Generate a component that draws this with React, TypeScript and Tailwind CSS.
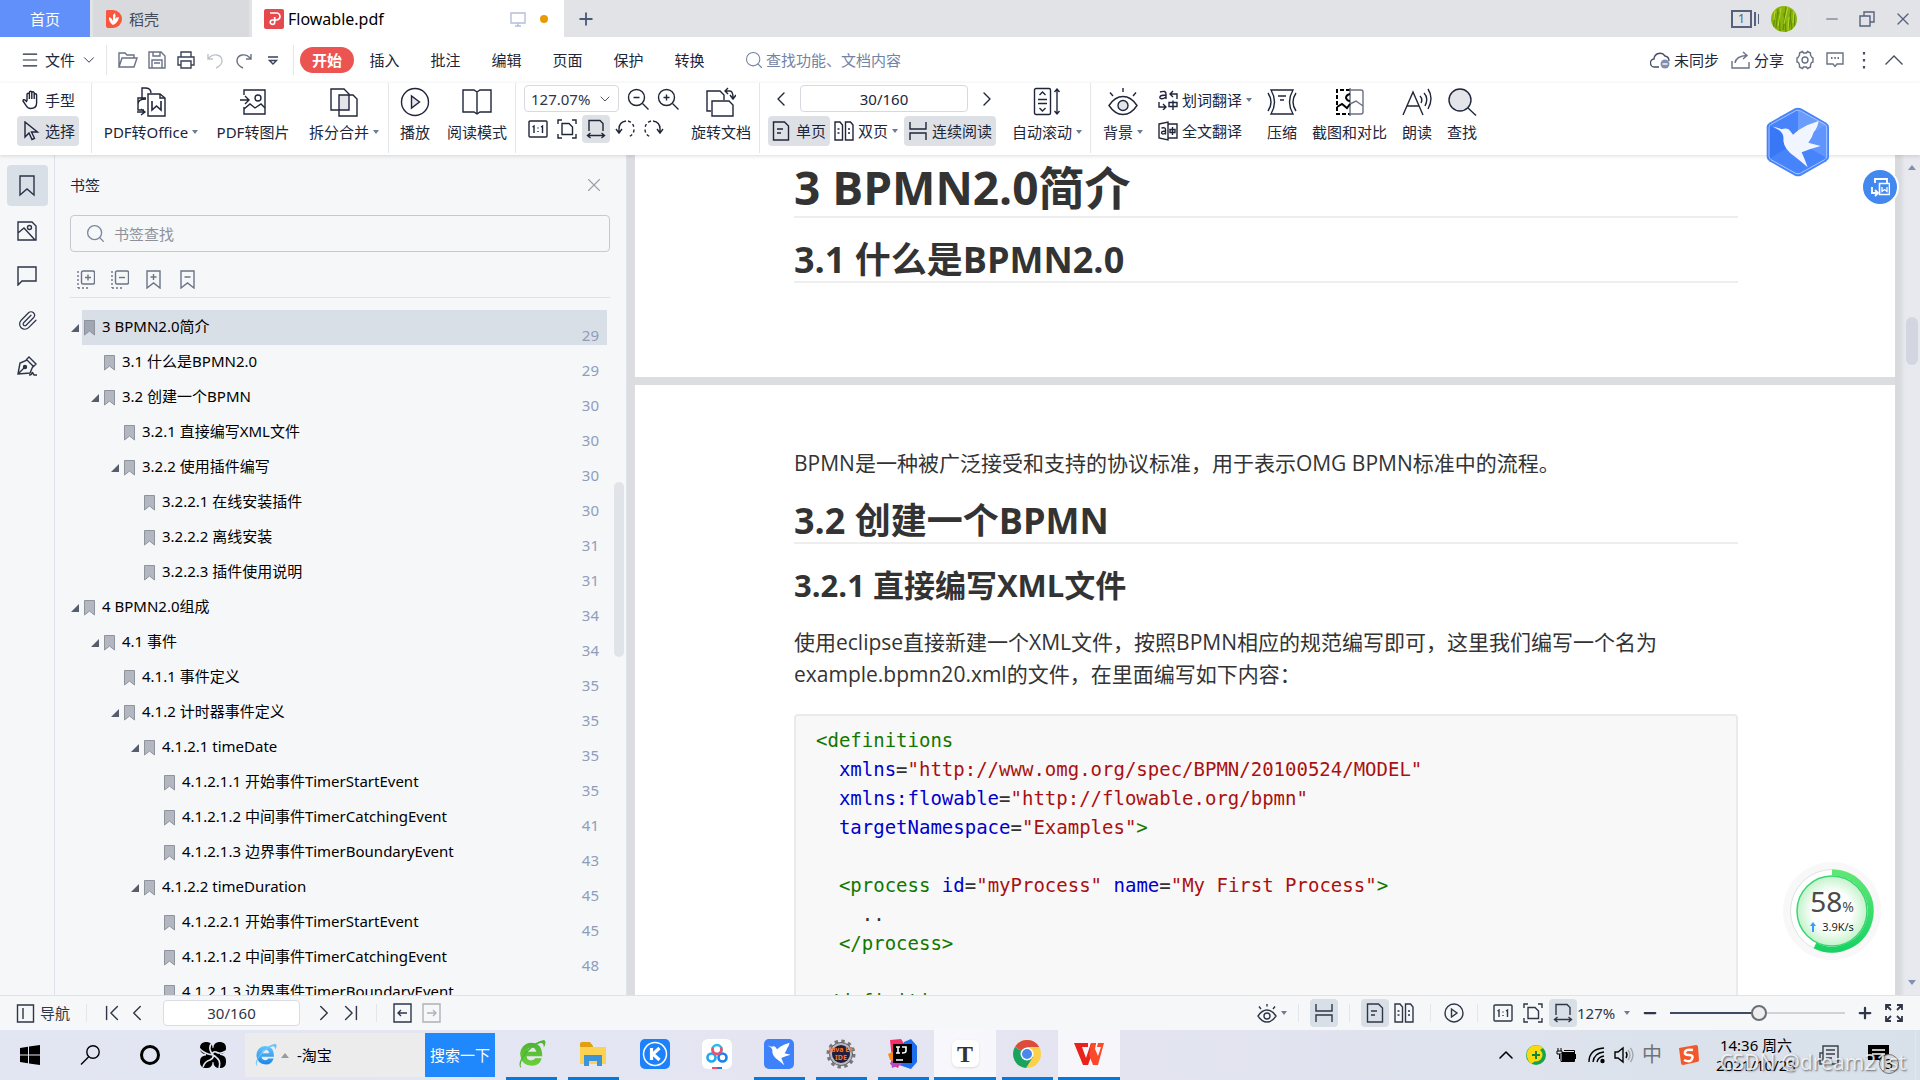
import React from "react";
import {
  ChevronDown,
  ChevronLeft,
  ChevronRight,
  ChevronUp,
  ChevronFirst,
  ChevronLast,
  Menu,
  Minus,
  Paperclip,
  Plus,
  Search,
  X,
} from "lucide-react";

interface IconProps {
  w?: number;
  h?: number;
  className?: string;
  children: React.ReactNode;
}

const Icon: React.FC<IconProps> = ({ w = 20, h = 20, className = "", children }) => (
  <svg
    width={w}
    height={h}
    viewBox={`0 0 ${w} ${h}`}
    fill="none"
    stroke="currentColor"
    strokeWidth={1.4}
    className={`shrink-0 ${className}`}
    aria-hidden="true"
  >
    {children}
  </svg>
);

const Caret = () => (
  <svg width="6" height="4" viewBox="0 0 6 4" className="shrink-0" aria-hidden="true">
    <path d="M0 0h6L3 4z" fill="#6d7a99" />
  </svg>
);

const Sep = ({ className = "" }: { className?: string }) => (
  <div className={`w-px shrink-0 bg-[#e4e6ea] ${className}`} />
);

/* ---------- shared page view icons ---------- */

const ActualSizeIcon = () => (
  <Icon>
    <rect x="1" y="2" width="18" height="16" rx="1" />
    <path d="M4.500 8l1.500-1v7M13 8l1.500-1v7M10 8.500v1M10 12v1" />
  </Icon>
);

const FitPageIcon = () => (
  <Icon>
    <path d="M1 5V1h4M15 1h4v4M19 15v4h-4M5 19H1v-4" />
    <path d="M5 4.500h7l3.500 3.500v7.500H5z" />
  </Icon>
);

const FitWidthIcon = () => (
  <Icon>
    <path d="M3 12V1.500h11l3 3V12" />
    <path d="M1.500 16.500h17M4.500 14l-3 2.500 3 2.500M15.500 14l3 2.500-3 2.500" />
  </Icon>
);

const SinglePageIcon = () => (
  <Icon w={18}>
    <path d="M1.500 1h11l4 4v14h-15zM5 8h6M5 12h4" />
  </Icon>
);

const DoublePageIcon = () => (
  <Icon>
    <path d="M1 1h5l2.500 3v15H1zM11.500 1h5L19 4v15h-7.500zM3.500 8h2M3.500 12h2M14 8h2M14 12h2" />
  </Icon>
);

const ContinuousIcon = () => (
  <Icon>
    <path d="M2 1v7h16V1M2 19v-7h16v7" />
  </Icon>
);

const BirdPath = ({ fill }: { fill: string }) => (
  <path
    d="M458 381Q472 383 483 389Q502 382 509 393L518 405Q535 389 560 377L595 364Q592 384 580 398Q576 414 564 429L601 439Q570 447 544 458Q553 478 562 503Q541 484 524 471Q492 450 489 423Q492 402 476 391Z"
    fill={fill}
  />
);

/* ---------- title bar ---------- */

const TitleBar = () => (
  <header className="flex h-[37px] shrink-0 items-stretch bg-[#e2e3e7]">
    <button className="w-[90px] bg-[#6190fb] text-white">首页</button>
    <button className="ml-[3px] flex w-[156px] items-center gap-[7px] bg-[#d9dadd] pl-[13px] text-[#454b57]">
      <svg width="16" height="18" viewBox="0 0 16 18" aria-hidden="true">
        <path d="M1 0h6a9 9 0 0 1 0 18H2a2 2 0 0 1-2-2V1z" fill="#f8573e" />
        <path d="M7 15C3 12 3 9 3 7q3 1 4 4V5l2-2q1 2 0 6 1-2 4-2-1 6-6 8z" fill="#fff" />
      </svg>
      稻壳
    </button>
    <div className="ml-[3px] flex w-[312px] items-center bg-white pl-3">
      <svg width="20" height="20" viewBox="0 0 20 20" aria-hidden="true">
        <rect width="20" height="20" rx="2" fill="#e5484d" />
        <path
          d="M6 4h6.500a3.500 3.500 0 0 1 0 7H8.500a2.200 2.200 0 1 0 2.200 2.200V8"
          fill="none"
          stroke="#fff"
          strokeWidth="1.700"
        />
      </svg>
      <span className="ml-1 text-base text-black">Flowable.pdf</span>
      <Icon w={16} h={16} className="mr-3.5 ml-auto text-[#b4bfdc]">
        <path d="M1 2h14v10H1zM8 12v3M5 15h6" />
      </Icon>
      <span className="mr-4 h-2 w-2 rounded-full bg-[#e89a07]" />
    </div>
    <button className="flex w-11 items-center justify-center text-[#4c587a]" aria-label="新建标签">
      <Plus size={20} strokeWidth={2.2} />
    </button>
    <div className="ml-auto flex items-center text-[#56627d]">
      <div className="flex gap-0.5">
        <span className="flex h-[18px] w-[21px] items-center justify-center border-2 border-[#56627d] text-xs">
          1
        </span>
        <span className="my-0.5 w-0.5 bg-[#56627d]" />
        <span className="my-1 w-px bg-[#56627d]" />
      </div>
      <svg width="26" height="26" viewBox="0 0 26 26" className="ml-3" aria-hidden="true">
        <defs>
          <clipPath id="avatar">
            <circle cx="13" cy="13" r="13" />
          </clipPath>
        </defs>
        <g clipPath="url(#avatar)" fill="none">
          <rect width="26" height="26" fill="#8cb50c" />
          <path
            d="M2 26L4 8M5 22L7 3M9 26l-1-20M12 24l3-23M15 26L13 7M18 23l2-19M21 24l-2-16M24 22l-1-14"
            stroke="#5f8f05"
            strokeWidth="1.200"
          />
          <path
            d="M7 20l3-18M13 18l4-18M17 24l1-13M22 17l1-12M3 14l1-10"
            stroke="#b9d72f"
            strokeWidth="1"
          />
        </g>
      </svg>
      <Sep className="ml-3 h-6 bg-[#c8cad0]" />
      <button className="flex w-11 justify-center" aria-label="最小化">
        <Minus size={18} strokeWidth={1.6} />
      </button>
      <button className="flex w-[26px] justify-center" aria-label="还原">
        <Icon w={16} h={16}>
          <path d="M1 5h10v10H1zM5 5V1h10v10h-4" />
        </Icon>
      </button>
      <button className="ml-1.5 flex w-[34px] justify-center" aria-label="关闭">
        <X size={20} strokeWidth={1.6} />
      </button>
    </div>
  </header>
);

/* ---------- menu row ---------- */

const menuTabs = ["插入", "批注", "编辑", "页面", "保护", "转换"];

const MenuRow = () => (
  <div className="flex h-[46px] shrink-0 items-center bg-white pl-5 text-[#20263a]">
    <button className="flex w-20 items-center justify-between pr-0.5">
      <Menu size={20} strokeWidth={1.4} />
      文件
      <ChevronDown size={18} strokeWidth={1.2} />
    </button>
    <Sep className="mx-1.5 h-[30px]" />
    <div className="flex text-[#6a7183]">
      <button className="flex w-[29px] justify-center" aria-label="打开">
        <Icon h={18}>
          <path d="M1 16V2h6l2 2h7v3M1 16L4 7h15l-3 9z" />
        </Icon>
      </button>
      <button className="flex w-[29px] justify-center" aria-label="保存">
        <Icon w={18} h={18}>
          <path d="M1 1h12l4 4v12H1zM5 1v4h7V1M4 17V9h10v8M6 12h6" />
        </Icon>
      </button>
      <button className="flex w-[29px] justify-center text-[#3b4257]" aria-label="打印">
        <Icon w={18} h={18}>
          <path d="M4 6V1h10v5M4 14H1V6h16v8h-3M4 10h10v7H4z" />
        </Icon>
      </button>
      <button className="flex w-[29px] justify-center text-[#c0c3ca]" aria-label="撤销">
        <Icon w={16} h={18}>
          <path d="M1 3v5h5M1 8q4-5 9-4 5 1 5 6 0 4-6 7" />
        </Icon>
      </button>
      <button className="flex w-[29px] justify-center" aria-label="重做">
        <Icon w={16} h={18}>
          <path d="M15 3v5h-5M15 8q-4-5-9-4-5 1-5 6 0 4 6 7" />
        </Icon>
      </button>
      <button className="flex w-[29px] justify-center text-[#3b4257]" aria-label="更多">
        <Icon w={12} h={18}>
          <path d="M1 6h10M2.500 9.500L6 13l3.500-3.500z" />
        </Icon>
      </button>
    </div>
    <Sep className="mx-1.5 h-[30px]" />
    <button className="h-[26px] w-[54px] rounded-full bg-[#eb5451] font-bold text-white">
      开始
    </button>
    {menuTabs.map((tab) => (
      <button key={tab} className="w-[61px]">
        {tab}
      </button>
    ))}
    <label className="ml-6 flex items-center gap-0.5 text-[#7482a3]">
      <Search size={20} strokeWidth={1.3} />
      <input
        aria-label="查找功能"
        placeholder="查找功能、文档内容"
        className="w-40 bg-transparent outline-none placeholder:text-[#7482a3]"
      />
    </label>
    <div className="ml-auto flex items-center gap-3 pr-4">
      <button className="flex items-center gap-1">
        <Icon>
          <path d="M9 17H5a4 4 0 0 1-1-8 6 6 0 0 1 11-3 5 5 0 0 1 4 5" stroke="#454d63" />
          <circle cx="15" cy="14" r="4.500" fill="#8290b0" stroke="none" />
          <path d="M12.500 14h5" stroke="#fff" />
        </Icon>
        未同步
      </button>
      <button className="flex items-center gap-1">
        <Icon w={19} h={18} className="text-[#6a7183]">
          <path d="M1 10v7h17v-6M4 12q1-7 12-7.500M12 1l4 3.500L12 8" />
        </Icon>
        分享
      </button>
      <button aria-label="设置" className="text-[#6a7183]">
        <Icon w={18}>
          <path d="M6.500 1.500l1 1.500h3l1-1.500 3 1.500v2l1.500 2.500L17 8v4l-1.500.5-1 2.500v2l-3 1.500-1-1.500h-3l-1 1.500-3-1.500v-2l-1-2.500L1 12V8l1-.5L3.500 5V3z" />
          <circle cx="9" cy="10" r="3" />
        </Icon>
      </button>
      <button aria-label="反馈" className="text-[#6a7183]">
        <Icon w={18} h={16}>
          <path d="M1 1h16v11h-6l-2 2.500L7 12H1z" />
          <path d="M5 6h1.500M8.300 6h1.500M11.500 6H13" strokeWidth="1.800" />
        </Icon>
      </button>
      <button aria-label="更多选项" className="px-1.5 text-[#454d63]">
        <Icon w={4} h={18}>
          <path d="M2 1v2.500M2 8v2.500M2 15v2.500" strokeWidth="2.200" />
        </Icon>
      </button>
      <button aria-label="收起功能区" className="text-[#454d63]">
        <Icon w={20} h={12}>
          <path d="M1.500 10.500L10 2l8.500 8.500" />
        </Icon>
      </button>
    </div>
  </div>
);

/* ---------- ribbon ---------- */

interface ToolProps {
  label: string;
  width: string;
  caret?: boolean;
  children: React.ReactNode;
}

const Tool: React.FC<ToolProps> = ({ label, width, caret, children }) => (
  <button className={`flex shrink-0 flex-col items-center justify-between pt-1 pb-[13px] ${width}`}>
    <span className="flex h-[30px] items-center">{children}</span>
    <span className="flex h-5 items-center gap-1 whitespace-nowrap">
      {label}
      {caret && <Caret />}
    </span>
  </button>
);

const Ribbon = () => (
  <div className="relative z-10 flex h-[72px] shrink-0 bg-white pl-[17px] text-[#20263a] shadow-[0_1px_4px_rgba(0,0,0,0.14)]">
    <div className="flex w-[62px] shrink-0 flex-col gap-px pt-0.5">
      <button className="flex h-[30px] items-center justify-center gap-1">
        <Icon>
          <path d="M6 11V4.500a1.200 1.200 0 0 1 2.400 0V2.500a1.200 1.200 0 0 1 2.400 0v.5a1.200 1.200 0 0 1 2.400 0v2a1.200 1.200 0 0 1 2.400 0V13q0 5.500-6 5.500-3 0-4.500-3L2 11q0-2 2-1l2 2M8.400 4.500V9M10.800 3v6M13.200 4v5" />
        </Icon>
        手型
      </button>
      <button className="flex h-[30px] items-center justify-center gap-1 rounded-sm bg-[#dde1e6]">
        <Icon>
          <path d="M4 1v15l4-4 3 6.500 2.500-1.200-3-6.300h6z" />
        </Icon>
        选择
      </button>
    </div>
    <Sep className="mx-3 mb-0.5" />
    <div className="flex gap-[18px]">
      <Tool label="PDF转Office" width="w-[94px]" caret>
        <Icon w={30} h={30}>
          <path d="M10 11H2v5M6 11V1h3q6 0 6 5M2 16v7h6M2 17q0-5 8-5M1 25l7 0M5 22l4 3-4 3" />
          <path d="M12 7h12l5 4v18H12z" fill="#fff" />
          <path d="M24 7v4h5" />
          <path d="M16 14v9l4.500-4 4.500 4v-9" strokeWidth="1.600" />
        </Icon>
      </Tool>
      <Tool label="PDF转图片" width="w-[74px]">
        <Icon w={28} h={28}>
          <path d="M5 7V2h21v24H5v-7M1 12h9M6 8l4 4-4 4" />
          <circle cx="19" cy="10" r="3" />
          <path d="M5 21l6-5 5 4 6-4 4 4" />
        </Icon>
      </Tool>
      <Tool label="拆分合并" width="w-[72px]" caret>
        <Icon w={30} h={30}>
          <path d="M10 8h10v15H10z" fill="#e3e5ea" stroke="none" />
          <path d="M20 23H2V2h13l5 5zM10 23v6h18V12l-4-4H10v15" />
        </Icon>
      </Tool>
    </div>
    <Sep className="mx-2 mb-0.5" />
    <div className="flex gap-[14px]">
      <Tool label="播放" width="w-[36px]">
        <Icon w={30} h={30}>
          <circle cx="15" cy="15" r="13.500" />
          <path d="M11.500 9v12l8-6z" fill="#e3e5ea" />
        </Icon>
      </Tool>
      <Tool label="阅读模式" width="w-[60px]">
        <Icon w={30} h={30}>
          <path d="M15 27l-3-2H1V3h11l3 2 3-2h11v22H18zM15 5v22" />
        </Icon>
      </Tool>
    </div>
    <Sep className="mx-2 mb-0.5" />
    <div className="flex w-[155px] shrink-0 flex-col gap-[3px] pt-0.5">
      <div className="flex items-center gap-2">
        <div className="relative w-[95px]">
          <select
            aria-label="缩放比例"
            className="h-[27px] w-full appearance-none rounded-sm border border-[#d6d9e0] bg-white pl-1.5 text-[#2f3648]"
          >
            <option>127.07%</option>
          </select>
          <ChevronDown
            size={16}
            strokeWidth={1.2}
            className="pointer-events-none absolute top-1.5 right-1.5"
          />
        </div>
        <button aria-label="缩小">
          <Icon w={22} h={22}>
            <circle cx="9.500" cy="9.500" r="8" />
            <path d="M15.500 15.500l6 6M6.500 9.500h6" />
          </Icon>
        </button>
        <button aria-label="放大">
          <Icon w={22} h={22}>
            <circle cx="9.500" cy="9.500" r="8" />
            <path d="M15.500 15.500l6 6M6.500 9.500h6M9.500 6.500v6" />
          </Icon>
        </button>
      </div>
      <div className="flex gap-px">
        <button className="flex h-7 w-7 items-center justify-center" aria-label="实际大小">
          <ActualSizeIcon />
        </button>
        <button className="flex h-7 w-7 items-center justify-center" aria-label="适合页面">
          <FitPageIcon />
        </button>
        <button
          className="flex h-7 w-7 items-center justify-center rounded-sm bg-[#dde1e6]"
          aria-label="适合宽度"
        >
          <FitWidthIcon />
        </button>
        <button className="flex h-7 w-7 items-center justify-center" aria-label="向左旋转">
          <Icon>
            <path d="M4 13V10q0-7 7-8M1 10l3 4 3-4" />
            <path d="M13 2q6 2 6 8t-6 8" strokeDasharray="3 2.500" />
          </Icon>
        </button>
        <button className="flex h-7 w-7 items-center justify-center" aria-label="向右旋转">
          <Icon>
            <path d="M16 13V10q0-7-7-8M13 10l3 4 3-4" />
            <path d="M7 2q-6 2-6 8t6 8" strokeDasharray="3 2.500" />
          </Icon>
        </button>
      </div>
    </div>
    <div className="ml-3 flex">
      <Tool label="旋转文档" width="w-[60px]">
        <Icon w={30} h={30}>
          <path d="M5 24H1V4h13l4 4v5M6 29V14h17l4 4v11z" />
          <path d="M19 4h5q3 0 3 7M22 1l-3 3 3 3M24 8l3 4 3-4" />
        </Icon>
      </Tool>
    </div>
    <Sep className="mx-2 mb-0.5" />
    <div className="flex w-[232px] shrink-0 flex-col gap-1 pt-0.5">
      <div className="flex items-center gap-1.5">
        <button className="flex w-[26px] justify-center" aria-label="上一页">
          <ChevronLeft size={24} strokeWidth={1.4} />
        </button>
        <input
          aria-label="页码"
          defaultValue="30/160"
          className="h-[27px] w-[168px] rounded-sm border border-[#d6d9e0] text-center"
        />
        <button className="flex w-[26px] justify-center" aria-label="下一页">
          <ChevronRight size={24} strokeWidth={1.4} />
        </button>
      </div>
      <div className="flex gap-1">
        <button className="flex h-[30px] w-[62px] items-center justify-center gap-1.5 rounded-sm bg-[#dde1e6]">
          <SinglePageIcon />
          单页
        </button>
        <button className="flex h-[30px] w-[66px] items-center gap-1">
          <DoublePageIcon />
          双页
          <Caret />
        </button>
        <button className="flex h-[30px] w-[92px] items-center justify-center gap-1 rounded-sm bg-[#dde1e6]">
          <ContinuousIcon />
          连续阅读
        </button>
      </div>
    </div>
    <div className="ml-3 flex">
      <Tool label="自动滚动" width="w-[70px]" caret>
        <Icon w={28} h={30}>
          <rect x="1.500" y="1.500" width="16" height="26" rx="1.500" />
          <path d="M6.500 8l3-3 3 3M6.500 21l3 3 3-3M5 12.500h9M5 16.500h9M24 2v25M21.500 5L24 2l2.500 3M21.500 24l2.500 3 2.500-3" />
        </Icon>
      </Tool>
    </div>
    <Sep className="mx-2 mb-0.5" />
    <div className="flex gap-[15px] pl-1">
      <Tool label="背景" width="w-[40px]" caret>
        <Icon w={30} h={30}>
          <path d="M1 18.500Q7 9.500 15 9.500t14 9q-6 9-14 9T1 18.500z" />
          <circle cx="15" cy="18.500" r="5" fill="#e3e5ea" />
          <path d="M15 1v4M2 5.500l3 3.500M28 5.500L25 9" />
        </Icon>
      </Tool>
      <div className="flex w-[94px] flex-col gap-px pt-0.5">
        <button className="flex h-[30px] items-center gap-1 whitespace-nowrap">
          <Icon>
            <path d="M2 2q6-2 6 2v5M8 5Q1 5 2 8q2 2 6-1M12 4h7v5M15 1l-3 3 3 3M1 12v5h7M5 14l3 3-3 3M11 12.500h8v4h-8zM15 10.500V20" />
          </Icon>
          划词翻译
          <Caret />
        </button>
        <button className="flex h-[30px] items-center gap-1 whitespace-nowrap">
          <Icon>
            <path d="M1 3l9-2v18l-9-2zM10 3h9v14h-9M3.500 7q4-1 4 1.500v5M7.500 10q-4 0-4 2 1 2 4 0M12 8.500h5v3h-5zM14.500 6v8" />
          </Icon>
          全文翻译
        </button>
      </div>
      <Tool label="压缩" width="w-[30px]">
        <Icon w={30} h={28}>
          <path d="M4 2h22q-7 12 0 24H4q7-12 0-24zM11 8h8M13 12h4M1 5q6 9 0 18M29 5q-6 9 0 18" />
        </Icon>
      </Tool>
      <Tool label="截图和对比" width="w-[75px]">
        <Icon w={30} h={28}>
          <path d="M15 2H2v24h13" stroke="#000" strokeWidth="2" strokeDasharray="4 2" />
          <path d="M15 0v28M15 2h11q2 0 2 2v20q0 2-2 2H15M15 16l6-3 7 5" stroke="#6a7183" />
          <path d="M15 6q-4 1-4 4 1 3 4 3M2 19l5-3 5 4 3-4" stroke="#000" strokeWidth="2" />
        </Icon>
      </Tool>
      <Tool label="朗读" width="w-[30px]">
        <Icon w={30} h={28}>
          <path d="M1 27L11 4l10 23M5 18h12M18 8q3 3 1 7M22 5q5 5 1 13M26 1q6 9 0 20" />
        </Icon>
      </Tool>
      <Tool label="查找" width="w-[30px]">
        <Icon w={30} h={28}>
          <circle cx="13" cy="12" r="11" fill="#e3e5ea" />
          <path d="M21 20l8 7.500" />
        </Icon>
      </Tool>
    </div>
  </div>
);

/* ---------- bookmark panel ---------- */

interface Bookmark {
  title: string;
  page: number;
  indent: string;
  open?: boolean;
}

const bookmarks: Bookmark[] = [
  { title: "3 BPMN2.0简介", page: 29, indent: "pl-0", open: true },
  { title: "3.1 什么是BPMN2.0", page: 29, indent: "pl-5" },
  { title: "3.2 创建一个BPMN", page: 30, indent: "pl-5", open: true },
  { title: "3.2.1 直接编写XML文件", page: 30, indent: "pl-10" },
  { title: "3.2.2 使用插件编写", page: 30, indent: "pl-10", open: true },
  { title: "3.2.2.1 在线安装插件", page: 30, indent: "pl-15" },
  { title: "3.2.2.2 离线安装", page: 31, indent: "pl-15" },
  { title: "3.2.2.3 插件使用说明", page: 31, indent: "pl-15" },
  { title: "4 BPMN2.0组成", page: 34, indent: "pl-0", open: true },
  { title: "4.1 事件", page: 34, indent: "pl-5", open: true },
  { title: "4.1.1 事件定义", page: 35, indent: "pl-10" },
  { title: "4.1.2 计时器事件定义", page: 35, indent: "pl-10", open: true },
  { title: "4.1.2.1 timeDate", page: 35, indent: "pl-15", open: true },
  { title: "4.1.2.1.1 开始事件TimerStartEvent", page: 35, indent: "pl-20" },
  { title: "4.1.2.1.2 中间事件TimerCatchingEvent", page: 41, indent: "pl-20" },
  { title: "4.1.2.1.3 边界事件TimerBoundaryEvent", page: 43, indent: "pl-20" },
  { title: "4.1.2.2 timeDuration", page: 45, indent: "pl-15", open: true },
  { title: "4.1.2.2.1 开始事件TimerStartEvent", page: 45, indent: "pl-20" },
  { title: "4.1.2.1.2 中间事件TimerCatchingEvent", page: 48, indent: "pl-20" },
  { title: "4.1.2.1.3 边界事件TimerBoundaryEvent", page: 50, indent: "pl-20" },
];

const SideRail = () => (
  <nav className="flex w-[55px] shrink-0 flex-col items-center gap-1 border-r border-[#dfe2e8] bg-[#f5f7f9] pt-2.5 text-[#2c3347]">
    <button
      className="flex h-[41px] w-[41px] items-center justify-center rounded-sm bg-[#d9dfe6]"
      aria-label="书签"
    >
      <Icon w={16} h={22}>
        <path d="M1 1h14v19l-7-6-7 6z" />
      </Icon>
    </button>
    <button className="flex h-[41px] w-[41px] items-center justify-center" aria-label="缩略图">
      <Icon>
        <path d="M1 1h14l4 4v14H1zM1 12l6-5 11 12" />
        <circle cx="12.500" cy="6.500" r="2" />
      </Icon>
    </button>
    <button className="flex h-[41px] w-[41px] items-center justify-center" aria-label="批注">
      <Icon>
        <path d="M1 1h18v14H5l-4 4z" />
      </Icon>
    </button>
    <button className="flex h-[41px] w-[41px] items-center justify-center" aria-label="附件">
      <Paperclip size={21} strokeWidth={1.4} />
    </button>
    <button className="flex h-[41px] w-[41px] items-center justify-center" aria-label="签名">
      <Icon>
        <path d="M1 18l2-11 7-3 6 6-3 7zM9 4l3-3 7 7-3 3M1 18l6-6M12 19q3 0 3-2t2 2h3" />
        <circle cx="8" cy="11" r="1.500" fill="currentColor" />
      </Icon>
    </button>
  </nav>
);

const BookmarkPanel = () => (
  <aside className="flex w-[572px] shrink-0 flex-col border-r border-[#dfe2e8] bg-[#f5f7f9]">
    <div className="flex items-center justify-between pt-[19px] pr-[21px] pb-[19px] pl-[15px]">
      <h2 className="leading-[22px] text-[#20263a]">书签</h2>
      <button aria-label="关闭书签" className="text-[#9a9fa9]">
        <X size={22} strokeWidth={1.2} />
      </button>
    </div>
    <div className="mr-4 ml-[15px] border-b border-[#dfe2e8] pb-2">
      <label className="flex h-[37px] items-center gap-2 rounded-sm border border-[#c6c9cf] pl-3.5 text-[#7c879f]">
        <Search size={21} strokeWidth={1.5} />
        <input
          aria-label="书签查找"
          placeholder="书签查找"
          className="flex-1 bg-transparent outline-none placeholder:text-[#8e9198]"
        />
      </label>
      <div className="mt-[18px] flex gap-4 pl-[7px] text-[#6d7487]">
        <button aria-label="展开全部">
          <Icon w={18} h={19}>
            <rect x="4.500" y="1" width="13" height="13" rx="1.500" />
            <path d="M11 4.500v6M8 7.500h6" />
            <path d="M1 1v17M1 18h12" strokeDasharray="2 2" />
          </Icon>
        </button>
        <button aria-label="收起全部">
          <Icon w={18} h={19}>
            <rect x="4.500" y="1" width="13" height="13" rx="1.500" />
            <path d="M8 7.500h6" />
            <path d="M1 1v17M1 18h12" strokeDasharray="2 2" />
          </Icon>
        </button>
        <button aria-label="添加书签">
          <Icon w={18} h={19}>
            <path d="M2 1h13v17l-6.500-5L2 18zM8.500 4v6M5.500 7h6" />
          </Icon>
        </button>
        <button aria-label="删除书签">
          <Icon w={18} h={19}>
            <path d="M2 1h13v17l-6.500-5L2 18zM5.500 7h6" />
          </Icon>
        </button>
      </div>
    </div>
    <div className="relative mt-3 min-h-0 flex-1 overflow-hidden pr-[19px] pl-[15px]">
      <ul>
        {bookmarks.map((b, i) => (
          <li key={i} className={b.indent}>
            <button className="flex h-[35px] w-full items-stretch text-left text-black">
              <span className="flex w-3 shrink-0 items-center">
                {b.open && (
                  <svg width="9" height="9" viewBox="0 0 9 9" aria-hidden="true">
                    <path d="M9 1v8H1z" fill="#565d6d" />
                  </svg>
                )}
              </span>
              <span
                className={`flex flex-1 gap-[7px] pr-2 pl-0.5 ${i === 0 ? "bg-[#d9dfe6]" : ""}`}
              >
                <svg
                  width="11"
                  height="16"
                  viewBox="0 0 11 16"
                  className="self-center"
                  aria-hidden="true"
                >
                  <path
                    d="M.5.5h10v14.500l-5-4-5 4z"
                    fill={i === 0 ? "#a0a7b2" : "#b3b7bf"}
                    stroke="#8e939d"
                  />
                </svg>
                <span className="leading-[33px]">{b.title}</span>
                <span className="ml-auto self-end text-[#8f9dbb]">{b.page}</span>
              </span>
            </button>
          </li>
        ))}
      </ul>
      <div className="absolute top-[172px] right-0.5 h-[175px] w-2.5 rounded-full bg-[#e0e3e7]" />
    </div>
  </aside>
);

/* ---------- document ---------- */

const Tag = ({ children }: { children: React.ReactNode }) => (
  <span className="text-[#117700]">{children}</span>
);
const Attr = ({ children }: { children: React.ReactNode }) => (
  <span className="text-[#0000cc]">{children}</span>
);
const Str = ({ children }: { children: React.ReactNode }) => (
  <span className="text-[#aa1111]">{children}</span>
);

const DocumentView = () => (
  <main className="flex min-w-0 flex-1 bg-[#dcdde0] pl-2 font-['Open_Sans','Noto_Sans_CJK_SC',sans-serif] text-[#333333]">
    <div className="flex min-w-0 flex-1 flex-col gap-2 overflow-hidden">
      <section className="h-[222px] shrink-0 bg-white pr-[157px] pl-[159px]">
        <h1 className="h-[63px] border-b-2 border-[#eeeeee] text-[46px] leading-[64px] font-bold">
          3 BPMN2.0简介
        </h1>
        <h2 className="mt-5 h-[45px] border-b-2 border-[#eeeeee] text-[36px] leading-[44px] font-bold">
          3.1 什么是BPMN2.0
        </h2>
      </section>
      <section className="flex-1 overflow-hidden bg-white pt-[62px] pr-[157px] pl-[159px]">
        <p className="text-[21px] leading-8">
          BPMN是一种被广泛接受和支持的协议标准，用于表示OMG BPMN标准中的流程。
        </p>
        <h2 className="mt-5 h-[45px] border-b-2 border-[#eeeeee] text-[36px] leading-[44px] font-bold">
          3.2 创建一个BPMN
        </h2>
        <h3 className="mt-5 text-[31px] leading-[42px] font-bold">3.2.1 直接编写XML文件</h3>
        <p className="mt-5 text-[21px] leading-8">
          使用eclipse直接新建一个XML文件，按照BPMN相应的规范编写即可，这里我们编写一个名为
          <br />
          example.bpmn20.xml的文件，在里面编写如下内容：
        </p>
        <pre className="mt-6 overflow-hidden rounded border-2 border-[#e9eaed] bg-[#f8f8f8] px-5 py-2.5 font-['DejaVu_Sans_Mono',monospace] text-[19px] leading-[29px]">
          <Tag>&lt;definitions</Tag>
          {"\n  "}
          <Attr>xmlns</Attr>=<Str>"http://www.omg.org/spec/BPMN/20100524/MODEL"</Str>
          {"\n  "}
          <Attr>xmlns:flowable</Attr>=<Str>"http://flowable.org/bpmn"</Str>
          {"\n  "}
          <Attr>targetNamespace</Attr>=<Str>"Examples"</Str>
          <Tag>&gt;</Tag>
          {"\n\n  "}
          <Tag>&lt;process</Tag> <Attr>id</Attr>=<Str>"myProcess"</Str> <Attr>name</Attr>=
          <Str>"My First Process"</Str>
          <Tag>&gt;</Tag>
          {"\n    ..\n  "}
          <Tag>&lt;/process&gt;</Tag>
          {"\n\n"}
          <Tag>&lt;/definitions&gt;</Tag>
        </pre>
      </section>
    </div>
    <div className="flex w-[25px] shrink-0 flex-col items-center justify-between bg-linear-to-r from-[#d9dade] from-20% to-[#e8e9ee] to-40% py-2.5 pl-2">
      <svg width="8" height="5" viewBox="0 0 8 5" aria-hidden="true">
        <path d="M4 0l4 5H0z" fill="#8391b0" />
      </svg>
      <div className="mt-[147px] mb-auto h-12 w-3 rounded-full bg-[#d3d6e0]" />
      <svg width="8" height="5" viewBox="0 0 8 5" aria-hidden="true">
        <path d="M4 5l4-5H0z" fill="#8391b0" />
      </svg>
    </div>
  </main>
);

/* ---------- status bar ---------- */

const StatusBar = () => (
  <footer className="flex h-[35px] shrink-0 items-center border-t border-[#dfe2e8] bg-[#f5f7f9] pl-4 text-[#2f3648]">
    <button className="flex items-center gap-[5px]">
      <Icon w={19} h={19}>
        <path d="M1.500 1h16v17h-16zM7 4v11" />
      </Icon>
      导航
    </button>
    <Sep className="mx-4 h-[18px]" />
    <button aria-label="首页页码" className="flex w-[18px] justify-center">
      <ChevronFirst size={26} strokeWidth={1.3} className="shrink-0" />
    </button>
    <button aria-label="上一页" className="flex w-[42px] justify-center pr-2.5">
      <ChevronLeft size={26} strokeWidth={1.3} />
    </button>
    <input
      aria-label="当前页"
      defaultValue="30/160"
      className="h-[26px] w-[137px] rounded-sm border border-[#d9dce2] bg-white text-center"
    />
    <button aria-label="下一页" className="flex w-[42px] justify-center pl-1.5">
      <ChevronRight size={26} strokeWidth={1.3} />
    </button>
    <button aria-label="末页" className="flex w-[18px] justify-center">
      <ChevronLast size={26} strokeWidth={1.3} className="shrink-0" />
    </button>
    <Sep className="mx-4 h-[18px]" />
    <button aria-label="后退">
      <Icon w={19}>
        <path d="M1 1h17v18H1zM5 10h9M8 7l-3 3 3 3" />
      </Icon>
    </button>
    <button aria-label="前进" className="ml-2.5 text-[#aeb1b8]">
      <Icon w={19}>
        <path d="M1 1h17v18H1zM5 10h9M11 7l3 3-3 3" />
      </Icon>
    </button>
    <div className="ml-auto flex items-center gap-[11px] pr-[17px]">
      <button aria-label="背景" className="flex items-center gap-1">
        <Icon>
          <path d="M1 13q4-6 9-6t9 6q-4 6-9 6t-9-6zM10 1v2.500M2 3.500L4 6M18 3.500L16 6" />
          <circle cx="10" cy="13" r="3" />
        </Icon>
        <Caret />
      </button>
      <Sep className="h-[18px]" />
      <button
        aria-label="连续阅读"
        className="flex h-7 w-7 items-center justify-center rounded-sm bg-[#d9dfe6]"
      >
        <ContinuousIcon />
      </button>
      <Sep className="h-[18px]" />
      <div className="flex">
        <button
          aria-label="单页"
          className="flex h-7 w-7 items-center justify-center rounded-sm bg-[#d9dfe6]"
        >
          <SinglePageIcon />
        </button>
        <button aria-label="双页" className="flex h-7 w-[30px] items-center justify-center">
          <DoublePageIcon />
        </button>
      </div>
      <Sep className="h-[18px]" />
      <button aria-label="播放" className="px-0.5">
        <Icon>
          <circle cx="10" cy="10" r="9" />
          <path d="M7.500 6v8l5.500-4z" />
        </Icon>
      </button>
      <Sep className="h-[18px]" />
      <div className="flex items-center">
        <button aria-label="实际大小" className="flex h-7 w-7 items-center justify-center">
          <ActualSizeIcon />
        </button>
        <button aria-label="适合页面" className="mx-0.5 flex h-7 w-7 items-center justify-center">
          <FitPageIcon />
        </button>
        <button
          aria-label="适合宽度"
          className="flex h-7 w-7 items-center justify-center rounded-sm bg-[#d9dfe6]"
        >
          <FitWidthIcon />
        </button>
        <button className="flex w-[53px] items-center justify-between">
          127%
          <Caret />
        </button>
      </div>
      <button aria-label="缩小">
        <Minus size={18} strokeWidth={3} />
      </button>
      <input
        type="range"
        aria-label="缩放"
        min={0}
        max={100}
        defaultValue={51}
        className="h-4 w-[175px] appearance-none bg-[linear-gradient(90deg,#3f4a63_50%,#cfd2d8_50%)] bg-size-[100%_2px] bg-center bg-no-repeat [&::-webkit-slider-thumb]:h-4 [&::-webkit-slider-thumb]:w-4 [&::-webkit-slider-thumb]:appearance-none [&::-webkit-slider-thumb]:rounded-full [&::-webkit-slider-thumb]:border-2 [&::-webkit-slider-thumb]:border-[#6b6f78] [&::-webkit-slider-thumb]:bg-[#eeeeee]"
      />
      <button aria-label="放大">
        <Plus size={18} strokeWidth={3} />
      </button>
      <button aria-label="全屏">
        <Icon w={18} h={18}>
          <path
            d="M1 6V1h5M1 1l5 5M12 1h5v5M17 1l-5 5M17 12v5h-5M17 17l-5-5M6 17H1v-5M1 17l5-5"
            strokeWidth="1.800"
          />
        </Icon>
      </button>
    </div>
  </footer>
);

/* ---------- taskbar ---------- */

interface AppSlotProps {
  name: string;
  running?: boolean;
  active?: boolean;
  children: React.ReactNode;
}

const AppSlot: React.FC<AppSlotProps> = ({ name, running, active, children }) => (
  <button
    aria-label={name}
    className={`flex w-[62px] flex-col items-center ${active ? "bg-white/70" : ""}`}
  >
    <span className="flex flex-1 items-center">{children}</span>
    <span
      className={`h-[3px] ${active ? "w-full" : "w-[51px]"} ${running ? "bg-[#0a78d7]" : ""}`}
    />
  </button>
);

const IeLetter = ({ size, from, to }: { size: number; from: string; to: string }) => (
  <svg width={size} height={size} viewBox="0 0 28 28" aria-hidden="true">
    <defs>
      <linearGradient id={`ie${size}`} x1="0" y1="0" x2="0" y2="1">
        <stop offset="0" stopColor={from} />
        <stop offset="1" stopColor={to} />
      </linearGradient>
    </defs>
    <path
      d="M14 3.500A10.500 10.500 0 0 0 4 15q1 10 11 10 7 0 9-7h-6q-1 2-4 2-4-.5-4-4h14.500Q24.500 3.500 14 3.500zM10 12q1-4 4.500-4T19 12z"
      fill={`url(#ie${size})`}
      fillRule="evenodd"
    />
    <path d="M5 27Q0 24 9 12 18 2 26 1q3 1 0 7 0-5-4-4Q14 7 7 17q-4 6-2 10z" fill={from} />
  </svg>
);

const Taskbar = () => (
  <div className="relative flex h-[50px] shrink-0 bg-linear-to-r from-[#e2e6f2] via-[#e6e5f2] to-[#d8e1ea] text-black">
    <button className="flex w-[60px] items-center justify-center" aria-label="开始菜单">
      <svg width="20" height="20" viewBox="0 0 20 20" aria-hidden="true">
        <path d="M0 3l8-1.200V9.500H0zM9 1.600L20 0v9.500H9zM0 10.500h8v7.700L0 17zM9 10.500h11V20L9 18.400z" />
      </svg>
    </button>
    <button className="flex w-[60px] items-center justify-center" aria-label="搜索">
      <Icon>
        <circle cx="13" cy="7" r="6.200" />
        <path d="M8.500 12L1 19.500" />
      </Icon>
    </button>
    <button className="flex w-[60px] items-center justify-center" aria-label="Cortana">
      <span className="h-5 w-5 rounded-full border-[3px] border-black" />
    </button>
    <button className="flex w-[65px] items-center justify-center" aria-label="应用">
      <svg width="28" height="28" viewBox="0 0 28 28" aria-hidden="true">
        <rect x="1" y="1" width="12.500" height="12" rx="5.500" />
        <rect x="14.500" y="1" width="12.500" height="12" rx="5.500" />
        <rect x="1" y="14.500" width="12.500" height="12.500" rx="5.500" />
        <rect x="14.500" y="14" width="12.500" height="13" rx="5.500" />
        <rect x="7" y="7" width="14" height="14" rx="4" />
        <path
          d="M13.500 1Q9 6 12 11t2.500 4M27 10q-6 4-10 1-3-1-4 3M20 27q2-7-2-10-2-2-4-3M4 26q2-6 7-7 4-2 3-5M0 7q5 6 14 7"
          fill="none"
          stroke="#e3e6f2"
          strokeWidth="1.600"
        />
      </svg>
    </button>
    <div className="my-[3px] flex w-[250px] items-center bg-[#ececec] pl-2">
      <IeLetter size={24} from="#65c4fb" to="#1c86e8" />
      <svg width="8" height="5" viewBox="0 0 8 5" className="ml-1" aria-hidden="true">
        <path d="M4 0l4 5H0z" fill="#9b9b9b" />
      </svg>
      <input
        aria-label="任务栏搜索"
        defaultValue="-淘宝"
        className="min-w-0 flex-1 bg-transparent pl-2 outline-none"
      />
      <button className="w-[70px] self-stretch bg-[#1f88fd] whitespace-nowrap text-white">
        搜索一下
      </button>
    </div>
    <div className="ml-[5px] flex">
      <AppSlot name="360浏览器" running>
        <IeLetter size={30} from="#4fb531" to="#6ccf3a" />
      </AppSlot>
      <AppSlot name="文件资源管理器" running>
        <svg width="28" height="26" viewBox="0 0 28 26" aria-hidden="true">
          <path d="M1 3q0-2 2-2h8l3 4v4H1z" fill="#e0a011" />
          <path d="M1 6h26v17H1z" fill="#fcd253" />
          <path d="M5 25V14h18v11h-5v-5h-8v5z" fill="#3c94d9" />
        </svg>
      </AppSlot>
      <AppSlot name="酷狗音乐">
        <svg width="30" height="30" viewBox="0 0 30 30" aria-hidden="true">
          <rect width="30" height="30" rx="5" fill="#1c82fb" />
          <circle cx="15" cy="15" r="11.500" fill="none" stroke="#fff" strokeWidth="1.500" />
          <path d="M11.500 9v12M19.500 9l-6.500 6 6.500 6" stroke="#fff" strokeWidth="3.200" fill="none" />
        </svg>
      </AppSlot>
      <AppSlot name="百度网盘">
        <svg width="30" height="30" viewBox="0 0 30 30" aria-hidden="true">
          <rect width="30" height="30" rx="6" fill="#fff" />
          <g fill="none" strokeWidth="2.600">
            <circle cx="9.500" cy="18.500" r="4" stroke="#1ea7f4" />
            <circle cx="20.500" cy="18.500" r="4" stroke="#1b7ff0" />
            <circle cx="15" cy="10.500" r="4.500" stroke="#26b9f5" />
            <path d="M11 8.500a4.500 4.500 0 0 0 4 6.500 4.500 4.500 0 0 0 4-6.500" stroke="#f0506e" />
          </g>
          <path d="M10 28h5v2h-5z" fill="#f0506e" />
          <path d="M15 28h5v2h-5z" fill="#1b7ff0" />
        </svg>
      </AppSlot>
      <AppSlot name="迅雷" running>
        <svg width="30" height="30" viewBox="0 0 30 30" aria-hidden="true">
          <rect width="30" height="30" rx="5" fill="#3d82fb" />
          <svg x="2" y="3" width="26" height="24" viewBox="455 360 150 148">
            <BirdPath fill="#fff" />
          </svg>
        </svg>
      </AppSlot>
      <AppSlot name="Eclipse" running>
        <svg width="30" height="30" viewBox="0 0 30 30" aria-hidden="true">
          <circle
            cx="15"
            cy="15"
            r="13"
            fill="none"
            stroke="#777"
            strokeWidth="3"
            strokeDasharray="3.400 3.400"
          />
          <circle cx="15" cy="15" r="11.500" fill="#b9bac0" stroke="#5d5d62" />
          <circle cx="15" cy="15" r="9" fill="#241e3d" />
          <g fill="#f47a18" fontSize="7" fontWeight="700" textAnchor="middle">
            <text x="15" y="13">Java EE</text>
            <text x="15" y="21">IDE</text>
          </g>
        </svg>
      </AppSlot>
      <AppSlot name="IntelliJ IDEA" running>
        <svg width="30" height="30" viewBox="0 0 30 30" aria-hidden="true">
          <path d="M2 1l11-1 6 9-9 20-8-4L4 20z" fill="#f52f68" />
          <path d="M0 15l7-3 3 10-8-1z" fill="#fb8a1d" />
          <path d="M16 3l7-3 6 7v16l-6 7-12-4z" fill="#1c6df0" />
          <path d="M3 23l8-2 4 4-11 4z" fill="#b44ad0" />
          <rect x="5" y="5" width="19" height="19" fill="#000" />
          <path d="M8 8h4M10 8v6M8 14h4M14 8h4v4q0 2-4 2M8 21h7" stroke="#fff" strokeWidth="1.600" fill="none" />
        </svg>
      </AppSlot>
      <AppSlot name="Typora" running active>
        <span className="flex h-[27px] w-[27px] items-center justify-center rounded-md bg-white font-['Liberation_Serif',serif] text-2xl font-bold text-[#333] shadow">
          T
        </span>
      </AppSlot>
      <AppSlot name="Chrome" running>
        <svg width="28" height="28" viewBox="0 0 28 28" aria-hidden="true">
          <circle cx="14" cy="14" r="14" fill="#fdd04a" />
          <path d="M14 14L2 6.800A14 14 0 0 1 26.200 7H14z" fill="#dd4b3e" />
          <path d="M1.900 7A14 14 0 0 0 13 28l7-11-6-3z" fill="#1aa260" />
          <circle cx="14" cy="14" r="6.500" fill="#fff" />
          <circle cx="14" cy="14" r="5" fill="#4a87ee" />
        </svg>
      </AppSlot>
      <AppSlot name="WPS" running active>
        <svg width="30" height="24" viewBox="0 0 30 24" aria-hidden="true">
          <path d="M0 1h14v4H8l4 11 5-15h5l-8 22h-5z" fill="#e9221c" />
          <path d="M17 1h5l-1 6 3 7 3-9h-4l1-4h6l-6 22h-5l-4-10z" fill="#fb4a2a" />
        </svg>
      </AppSlot>
    </div>
    <div className="ml-auto flex items-center pr-[30px]">
      <button aria-label="显示隐藏的图标">
        <ChevronUp size={24} strokeWidth={1.6} />
      </button>
      <svg width="20" height="20" viewBox="0 0 20 20" className="ml-2" aria-hidden="true">
        <circle cx="10" cy="10" r="10" fill="#14a44d" />
        <path d="M1 12A9.500 9.500 0 0 1 17 3q-5 2-5 7t-7 9q-3-3-4-7z" fill="#fbd90f" />
        <circle cx="10" cy="10" r="6.500" fill="#fbd90f" />
        <path d="M10 6v8M6 10h8" stroke="#14833b" strokeWidth="2" />
      </svg>
      <svg width="20" height="16" viewBox="0 0 20 16" className="ml-2.5" aria-hidden="true">
        <path d="M6 5h12v9H6zM19 7h1v5h-1z" />
        <path d="M5 8v6.500h13.500v-11H8M2 1v3M5 1v3M1 4h5v3H1zM3.500 7v5" fill="none" stroke="#000" />
      </svg>
      <Icon w={18} h={18} className="ml-3">
        <path d="M1 16Q1 3 16 2M5 16q1-9 11-10M9 16q1-5 7-6" />
        <circle cx="14.500" cy="15" r="1.500" fill="currentColor" />
      </Icon>
      <Icon className="ml-2">
        <path d="M1 7h3l5-4v14l-5-4H1zM12 7q2 3 0 6" />
        <path d="M14 5q4 5 0 10M16.500 3q5 7 0 14" stroke="#a3a8af" />
      </Icon>
      <span className="ml-2 text-xl text-[#707276]">中</span>
      <svg width="22" height="20" viewBox="0 0 22 20" className="mr-2.5 ml-4" aria-hidden="true">
        <path d="M1 3L18 0q2 0 2 2l1 13q0 2-2 2L5 20q-2 0-2-2z" fill="#f2592a" />
        <path d="M15 5q-7-1-8 2t4 3 3 4-8 1" fill="none" stroke="#fff" strokeWidth="2.500" />
      </svg>
      <div className="flex w-[92px] flex-col items-center leading-5">
        <span>14:36 周六</span>
        <span>2021/10/23</span>
      </div>
      <Icon w={22} className="ml-4 text-[#3c3f45]">
        <path d="M5 1h15v18H2V8h3zM5 8v8M8 5h9M8 9h9M8 13h6" />
      </Icon>
      <svg width="22" height="20" viewBox="0 0 22 20" className="ml-7" aria-hidden="true">
        <path d="M0 0h21v15h-5v4l-5-4H0z" />
        <path d="M4 5h13M4 9h13" stroke="#fff" strokeWidth="1.500" />
      </svg>
    </div>
    <Sep className="absolute top-0 right-1 h-full bg-[#a9b3c2]" />
    <span className="absolute right-[21px] bottom-1.5 flex h-5 w-5 items-center justify-center rounded-full border border-[#777] bg-[#d5d8dc] text-sm">
      3
    </span>
    <span className="absolute right-3.5 bottom-1 text-[21px] leading-7 text-white/80 [text-shadow:1px_1px_2px_rgba(0,0,0,0.55)]">
      CSDN @dream21st
    </span>
  </div>
);

/* ---------- floating widgets ---------- */

const ThunderBadge = () => (
  <svg
    width="64"
    height="70"
    viewBox="437 322 192 210"
    className="absolute top-[107px] right-[90px] z-20"
    aria-hidden="true"
  >
    <path
      d="M524 326q9-4 18 0l76 43q8 5 8 14v89q0 8-8 13l-76 43q-9 4-18 0l-77-43q-8-5-8-13v-89q0-9 8-14z"
      fill="#4784fb"
    />
    <path d="M533 330v96l88-50z" fill="#6b9dfd" />
    <path d="M533 426l88-50v100z" fill="#5f95fc" />
    <path d="M444 376l89 50-89 52z" fill="#3877f6" />
    <path
      d="M526 333q7-3 14 0l73 41q6 4 6 10v86q0 6-6 10l-73 41q-7 3-14 0l-74-41q-6-4-6-10v-86q0-6 6-10z"
      fill="none"
      stroke="#a9c8ff"
      strokeWidth="3"
    />
    <BirdPath fill="#f1f5ff" />
  </svg>
);

const ConvertBubble = () => (
  <button
    aria-label="转换为Word"
    className="absolute top-[168px] right-[21px] z-20 flex h-[38px] w-[38px] items-center justify-center rounded-full border-2 border-white bg-[#4388ee] text-white"
  >
    <Icon>
      <path d="M5 6V2h12v4M2 10v6h5M5 13l3 3-3 3" strokeWidth="1.800" />
      <path d="M9.500 6.500h10v11h-10z" strokeWidth="1.600" />
      <path d="M12 10v4.500l2.500-2 2.500 2V10" strokeWidth="1.300" />
    </Icon>
  </button>
);

const MemoryBall = () => (
  <div className="absolute right-[39px] bottom-[120px] z-20 h-[98px] w-[98px]">
    <svg width="98" height="98" viewBox="0 0 98 98" aria-hidden="true">
      <defs>
        <radialGradient id="ball">
          <stop offset="0.55" stopColor="#ffffff" />
          <stop offset="1" stopColor="#c3f3ca" />
        </radialGradient>
        <linearGradient id="ring" x1="0" y1="0" x2="0" y2="1">
          <stop offset="0" stopColor="#5ee873" />
          <stop offset="1" stopColor="#17d363" />
        </linearGradient>
      </defs>
      <circle cx="49" cy="49" r="49" fill="#f8f8f8" />
      <circle cx="49" cy="49" r="41.500" fill="#fff" stroke="#e2e2e2" />
      <path d="M49 10.500a38.500 38.500 0 1 1-17 73" fill="none" stroke="url(#ring)" strokeWidth="6" />
      <circle cx="49" cy="49" r="35" fill="url(#ball)" stroke="#3bd575" strokeWidth="1.500" />
    </svg>
    <div className="absolute inset-0 flex flex-col items-center justify-center text-[#4a4a4a]">
      <div className="text-[28px] leading-8">
        58<span className="text-sm">%</span>
      </div>
      <div className="flex items-center gap-1.5 text-[11px] leading-5 text-[#222]">
        <svg width="6" height="10" viewBox="0 0 6 10" aria-hidden="true">
          <path d="M3 0l3 4H4v6H2V4H0z" fill="#3a9bff" />
        </svg>
        3.9K/s
      </div>
    </div>
  </div>
);

const App = () => (
  <div className="relative flex h-screen flex-col overflow-hidden bg-white font-['Noto_Sans','Noto_Sans_CJK_SC',sans-serif] text-[15px] leading-5">
    <TitleBar />
    <MenuRow />
    <Ribbon />
    <div className="flex min-h-0 flex-1">
      <SideRail />
      <BookmarkPanel />
      <DocumentView />
    </div>
    <StatusBar />
    <Taskbar />
    <ThunderBadge />
    <ConvertBubble />
    <MemoryBall />
  </div>
);

export default App;
